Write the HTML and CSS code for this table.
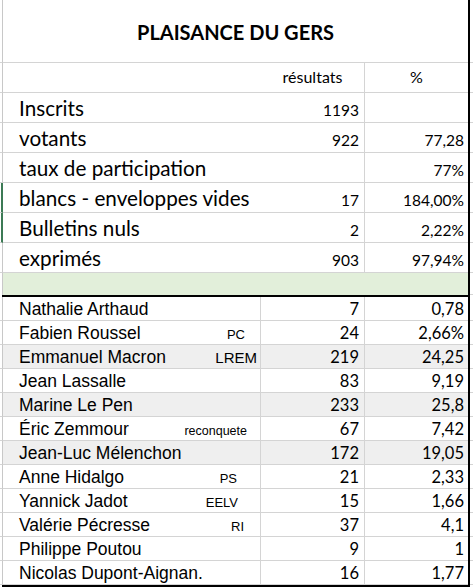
FILE: index.html
```html
<!DOCTYPE html>
<html lang="fr">
<head>
  <meta charset="UTF-8">
  <title>Plaisance du Gers</title>
  <link rel="stylesheet" href="styles.css">
</head>
<body>
  <div class="sheet">
    <!-- title (merged cells) -->
    <div class="row title-row">
      <div class="gutter"></div>
      <div class="cell title">PLAISANCE DU GERS</div>
      <div class="edge"></div>
      <div class="tail"></div>
    </div>

    <div class="row head-row">
      <div class="gutter"></div>
      <div class="cell label"></div>
      <div class="cell num center">résultats</div>
      <div class="cell pct center">%</div>
      <div class="edge"></div>
      <div class="tail"></div>
    </div>

    <div class="row big">
      <div class="gutter"></div>
      <div class="cell label">Inscrits</div>
      <div class="cell num">1193</div>
      <div class="cell pct"></div>
      <div class="edge"></div>
      <div class="tail"></div>
    </div>
    <div class="row big">
      <div class="gutter"></div>
      <div class="cell label">votants</div>
      <div class="cell num">922</div>
      <div class="cell pct">77,28</div>
      <div class="edge"></div>
      <div class="tail"></div>
    </div>
    <div class="row big">
      <div class="gutter"></div>
      <div class="cell label">taux de participation</div>
      <div class="cell num"></div>
      <div class="cell pct">77%</div>
      <div class="edge"></div>
      <div class="tail"></div>
    </div>
    <div class="row big marked">
      <div class="gutter"></div>
      <div class="cell label">blancs - enveloppes vides</div>
      <div class="cell num">17</div>
      <div class="cell pct">184,00%</div>
      <div class="edge"></div>
      <div class="tail"></div>
    </div>
    <div class="row big marked">
      <div class="gutter"></div>
      <div class="cell label">Bulletins nuls</div>
      <div class="cell num">2</div>
      <div class="cell pct">2,22%</div>
      <div class="edge"></div>
      <div class="tail"></div>
    </div>
    <div class="row big">
      <div class="gutter"></div>
      <div class="cell label">exprimés</div>
      <div class="cell num">903</div>
      <div class="cell pct">97,94%</div>
      <div class="edge"></div>
      <div class="tail"></div>
    </div>

    <div class="row green-row">
      <div class="gutter"></div>
      <div class="cell green"></div>
      <div class="edge"></div>
      <div class="tail"></div>
    </div>

    <div class="rule"></div>

    <div class="row cand">
      <div class="gutter"></div>
      <div class="cell name"><span>Nathalie Arthaud</span></div>
      <div class="cell num">7</div>
      <div class="cell pct">0,78</div>
      <div class="edge"></div>
      <div class="tail"></div>
    </div>
    <div class="row cand">
      <div class="gutter"></div>
      <div class="cell name"><span>Fabien Roussel</span><span class="party pc">PC</span></div>
      <div class="cell num">24</div>
      <div class="cell pct">2,66%</div>
      <div class="edge"></div>
      <div class="tail"></div>
    </div>
    <div class="row cand shade">
      <div class="gutter"></div>
      <div class="cell name"><span>Emmanuel Macron</span><span class="party lrem">LREM</span></div>
      <div class="cell num">219</div>
      <div class="cell pct">24,25</div>
      <div class="edge"></div>
      <div class="tail"></div>
    </div>
    <div class="row cand">
      <div class="gutter"></div>
      <div class="cell name"><span>Jean Lassalle</span></div>
      <div class="cell num">83</div>
      <div class="cell pct">9,19</div>
      <div class="edge"></div>
      <div class="tail"></div>
    </div>
    <div class="row cand shade">
      <div class="gutter"></div>
      <div class="cell name"><span>Marine Le Pen</span></div>
      <div class="cell num">233</div>
      <div class="cell pct">25,8</div>
      <div class="edge"></div>
      <div class="tail"></div>
    </div>
    <div class="row cand">
      <div class="gutter"></div>
      <div class="cell name"><span>Éric Zemmour</span><span class="party small">reconquete</span></div>
      <div class="cell num">67</div>
      <div class="cell pct">7,42</div>
      <div class="edge"></div>
      <div class="tail"></div>
    </div>
    <div class="row cand shade">
      <div class="gutter"></div>
      <div class="cell name"><span>Jean-Luc Mélenchon</span></div>
      <div class="cell num">172</div>
      <div class="cell pct">19,05</div>
      <div class="edge"></div>
      <div class="tail"></div>
    </div>
    <div class="row cand">
      <div class="gutter"></div>
      <div class="cell name"><span>Anne Hidalgo</span><span class="party ps">PS</span></div>
      <div class="cell num">21</div>
      <div class="cell pct">2,33</div>
      <div class="edge"></div>
      <div class="tail"></div>
    </div>
    <div class="row cand">
      <div class="gutter"></div>
      <div class="cell name"><span>Yannick Jadot</span><span class="party eelv">EELV</span></div>
      <div class="cell num">15</div>
      <div class="cell pct">1,66</div>
      <div class="edge"></div>
      <div class="tail"></div>
    </div>
    <div class="row cand">
      <div class="gutter"></div>
      <div class="cell name"><span>Valérie Pécresse</span><span class="party ri">RI</span></div>
      <div class="cell num">37</div>
      <div class="cell pct">4,1</div>
      <div class="edge"></div>
      <div class="tail"></div>
    </div>
    <div class="row cand">
      <div class="gutter"></div>
      <div class="cell name"><span>Philippe Poutou</span></div>
      <div class="cell num">9</div>
      <div class="cell pct">1</div>
      <div class="edge"></div>
      <div class="tail"></div>
    </div>
    <div class="row cand">
      <div class="gutter"></div>
      <div class="cell name"><span>Nicolas Dupont-Aignan.</span></div>
      <div class="cell num">16</div>
      <div class="cell pct">1,77</div>
      <div class="edge"></div>
      <div class="tail"></div>
    </div>

    <div class="rule"></div>
  </div>
</body>
</html>
```

FILE: styles.css
```css
* {
  box-sizing: border-box;
}

body {
  margin: 0;
  background-color: #fff;
  color: #000;
  font-family: Lato, "Open Sans", sans-serif;
}

.sheet {
  width: 473px;
}

/* one spreadsheet row: gutter | label | résultats | % | black edge | tail */
.row {
  display: grid;
  grid-template-columns: 3px 258px 104px 103px 2px 3px;
}

.gutter {
  border-right: 1px solid #c8c8c8;
  border-bottom: 1px solid #d4d4d4;
}

.marked .gutter {
  border-right: 2px solid #3c7a55;
}

.edge {
  background-color: #000;
}

.tail {
  border-bottom: 1px solid #d4d4d4;
}

.cell {
  display: flex;
  align-items: flex-end;
  border-bottom: 1px solid #d4d4d4;
  line-height: 1;
  white-space: nowrap;
}

.num {
  justify-content: flex-end;
  border-right: 1px solid #d4d4d4;
  padding-right: 5px;
}

.pct {
  justify-content: flex-end;
  padding-right: 4px;
}

.center {
  justify-content: center;
  padding-right: 0;
}

/* title */
.title-row {
  height: 63px;
}

.title {
  grid-column: 2 / 5;
  justify-content: center;
  align-items: flex-start;
  padding-top: 22px;
  font-size: 20px;
  font-weight: bold;
}

/* upper block */
.head-row {
  height: 30px;
}

.head-row .cell {
  font-size: 16px;
  padding-bottom: 7px;
}

.head-row .num {
  border-right: 1px solid #d4d4d4;
}

.big {
  height: 30px;
}

.big .label {
  padding-left: 16px;
  padding-bottom: 3px;
  font-size: 20.7px;
}

.big .num,
.big .pct {
  font-size: 15.5px;
  padding-bottom: 4px;
}

.green-row {
  height: 22px;
}

.green {
  grid-column: 2 / 5;
  background-color: #e2efda;
  border-bottom: none;
}

.green-row .gutter {
  border-bottom: none;
}

.rule {
  height: 2px;
  width: 468px;
  margin-left: 2px;
  background-color: #000;
}

/* candidates */
.cand {
  height: 24px;
}

.cand.shade .cell {
  background-color: #efefef;
}

.name {
  justify-content: space-between;
  padding-left: 16px;
  padding-bottom: 2px;
  font-family: "Liberation Sans", Arial, sans-serif;
  font-size: 17.5px;
  border-right: 1px solid #d4d4d4;
}

.cand .num,
.cand .pct {
  font-size: 16.5px;
  padding-bottom: 3px;
}

.party {
  font-size: 13px;
  padding-bottom: 1px;
  padding-right: 15px;
}

.party.lrem {
  font-size: 15px;
  padding-right: 3px;
}

.party.small {
  font-size: 12.5px;
  padding-right: 13px;
}

.party.ps {
  padding-right: 23px;
}

.party.eelv {
  padding-right: 22px;
}

.party.ri {
  padding-right: 16px;
}
```
